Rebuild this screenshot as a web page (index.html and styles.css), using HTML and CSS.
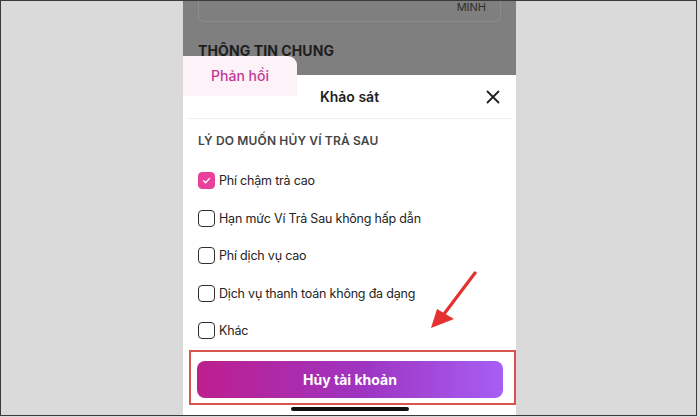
FILE: index.html
```html
<!DOCTYPE html>
<html lang="vi">
<head>
  <meta charset="UTF-8">
  <meta name="viewport" content="width=device-width, initial-scale=1.0">
  <title>Khảo sát</title>
  <link rel="stylesheet" href="styles.css">
</head>
<body>
  <div class="frame">
    <div class="phone">
      <div class="backdrop">
        <div class="info-box"><span>MINH</span></div>
        <h4 class="section-head">THÔNG TIN CHUNG</h4>
      </div>

      <div class="tab">Phản hồi</div>

      <div class="sheet">
        <div class="sheet-header">
          <span class="sheet-title">Khảo sát</span>
          <svg class="close" width="14" height="14" viewBox="0 0 14 14">
            <path d="M1.5 1.5 L12.5 12.5 M12.5 1.5 L1.5 12.5" stroke="#222" stroke-width="1.8" stroke-linecap="round"/>
          </svg>
        </div>

        <div class="reason-title">LÝ DO MUỐN HỦY VÍ TRẢ SAU</div>

        <ul class="options">
          <li class="option checked"><span class="box"><svg width="11" height="11" viewBox="0 0 11 11"><path d="M2.5 5.8 L4.6 7.8 L8.6 3.4" fill="none" stroke="#fff" stroke-width="1.3" stroke-linecap="round" stroke-linejoin="round"/></svg></span>Phí chậm trả cao</li>
          <li class="option"><span class="box"></span>Hạn mức Ví Trả Sau không hấp dẫn</li>
          <li class="option"><span class="box"></span>Phí dịch vụ cao</li>
          <li class="option"><span class="box"></span>Dịch vụ thanh toán không đa dạng</li>
          <li class="option"><span class="box"></span>Khác</li>
        </ul>

        <div class="highlight">
          <button class="cancel-btn">Hủy tài khoản</button>
        </div>

        <div class="home-bar"></div>
      </div>

      <svg class="arrow" width="70" height="70" viewBox="0 0 70 70">
        <path d="M64 2 L33 43" stroke="#e5312f" stroke-width="3.2" stroke-linecap="round"/>
        <path d="M20 57 L26 38 L43 48 Z" fill="#e5312f"/>
      </svg>
    </div>
  </div>
</body>
</html>
```

FILE: styles.css
```css
* { box-sizing: border-box; }
body {
  margin: 0;
  background: #dadada;
  font-family: Inter, "Noto Sans", sans-serif;
}
.frame {
  width: 697px;
  height: 416px;
  border: 1px solid #3a3a3a;
  background: #dadada;
  overflow: hidden;
}
.phone {
  position: relative;
  width: 333px;
  height: 414px;
  margin-left: 182px;
  display: flex;
  flex-direction: column;
  background: #fff;
}
.backdrop {
  height: 74px;
  background: #7f7f7f;
  padding: 0 15px;
}
.info-box {
  height: 21px;
  border: 1px solid #8c8c8c;
  border-top: none;
  border-radius: 0 0 6px 6px;
  position: relative;
}
.info-box span {
  position: absolute;
  right: 14px;
  top: 0;
  font-size: 11px;
  line-height: 12px;
  color: #2e2e2e;
}
.section-head {
  margin: 20px 0 0;
  font-size: 14px;
  font-weight: 700;
  color: #1e1e1e;
  letter-spacing: 0.1px;
}
.tab {
  position: absolute;
  left: 0;
  top: 55px;
  width: 114px;
  height: 40px;
  background: #fdf2f7;
  border-radius: 0 9px 0 0;
  color: #c23a97;
  font-size: 14px;
  font-weight: 500;
  text-align: center;
  line-height: 40px;
  z-index: 2;
}
.sheet {
  flex: 1;
  background: #fff;
  border-radius: 0 9px 0 0;
  display: flex;
  flex-direction: column;
}
.sheet-header {
  height: 44px;
  display: flex;
  align-items: center;
  justify-content: center;
  position: relative;
  margin: 0 4px;
  border-bottom: 1px solid #efefef;
}
.sheet-title {
  font-size: 14px;
  font-weight: 600;
  color: #1e1e1e;
}
.close {
  position: absolute;
  right: 12px;
  top: 15px;
}
.reason-title {
  margin: 14px 15px 0;
  font-size: 12px;
  font-weight: 600;
  color: #454545;
  letter-spacing: 0.15px;
  line-height: 16px;
}
.options {
  list-style: none;
  margin: 13px 0 0;
  padding: 0 15px;
}
.option {
  height: 37.5px;
  display: flex;
  align-items: center;
  gap: 4px;
  font-size: 12.5px;
  letter-spacing: -0.2px;
  color: #242424;
}
.box {
  width: 17px;
  height: 17px;
  border: 1.6px solid #2f2f2f;
  border-radius: 4px;
  display: flex;
  align-items: center;
  justify-content: center;
}
.option.checked .box {
  background: #e8409b;
  border-color: #e8409b;
}
.highlight {
  margin: 0 0 0 6px;
  border: 2px solid #d9534f;
  padding: 9px 11px 5px 6px;
}
.cancel-btn {
  display: block;
  width: 100%;
  height: 37px;
  border: none;
  border-radius: 8px;
  background: linear-gradient(90deg, #bd1f8e, #9e35c2 55%, #a75ef4);
  color: #fff;
  font-family: inherit;
  font-size: 14px;
  font-weight: 700;
}
.home-bar {
  width: 118px;
  height: 4px;
  border-radius: 2px;
  background: #111;
  margin: 2px auto 0;
}
.arrow {
  position: absolute;
  left: 228px;
  top: 270px;
}
```
